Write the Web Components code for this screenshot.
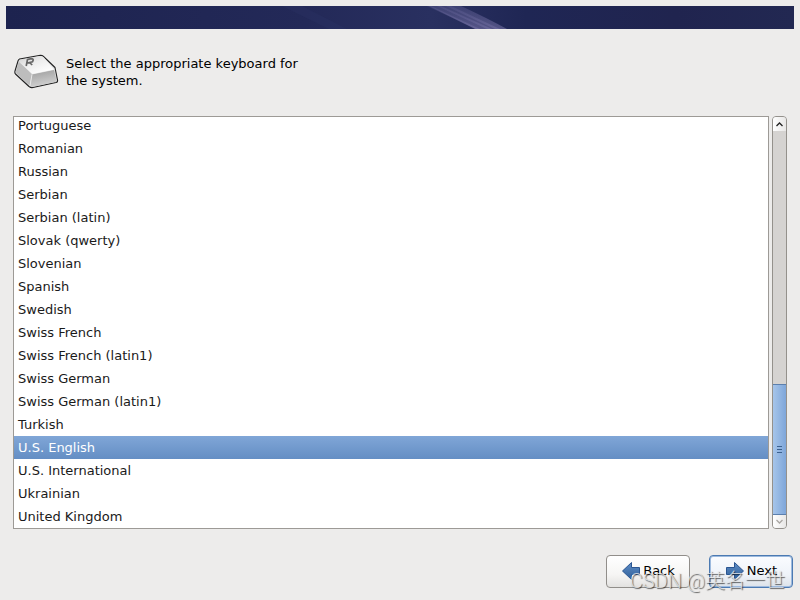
<!DOCTYPE html>
<html lang="en">
<head>
<meta charset="utf-8">
<meta name="viewport" content="width=device-width, initial-scale=1">
<title>Keyboard</title>
<style>
  body {
    margin: 0;
    background: #edeceb;
    color: #1a1a1a;
    font: 13px/17px "DejaVu Sans", sans-serif;
  }
</style>
</head>
<body>
<installer-screen>
  <installer-banner slot="banner"></installer-banner>
  <screen-prompt slot="prompt">Select the appropriate keyboard for the system.</screen-prompt>
  <keyboard-list>
    <keyboard-option>Portuguese</keyboard-option>
    <keyboard-option>Romanian</keyboard-option>
    <keyboard-option>Russian</keyboard-option>
    <keyboard-option>Serbian</keyboard-option>
    <keyboard-option>Serbian (latin)</keyboard-option>
    <keyboard-option>Slovak (qwerty)</keyboard-option>
    <keyboard-option>Slovenian</keyboard-option>
    <keyboard-option>Spanish</keyboard-option>
    <keyboard-option>Swedish</keyboard-option>
    <keyboard-option>Swiss French</keyboard-option>
    <keyboard-option>Swiss French (latin1)</keyboard-option>
    <keyboard-option>Swiss German</keyboard-option>
    <keyboard-option>Swiss German (latin1)</keyboard-option>
    <keyboard-option>Turkish</keyboard-option>
    <keyboard-option selected>U.S. English</keyboard-option>
    <keyboard-option>U.S. International</keyboard-option>
    <keyboard-option>Ukrainian</keyboard-option>
    <keyboard-option>United Kingdom</keyboard-option>
  </keyboard-list>
  <scroll-bar slot="scroll"></scroll-bar>
  <nav-button slot="actions" direction="back">Back</nav-button>
  <nav-button slot="actions" direction="next" primary>Next</nav-button>
  <water-mark slot="overlay">CSDN @英名一世</water-mark>
</installer-screen>

<script>
class InstallerScreen extends HTMLElement {
  constructor() {
    super();
    this.attachShadow({ mode: "open" });
  }

  connectedCallback() {
    this.shadowRoot.innerHTML = /* html */ `
      <style>
        :host {
          box-sizing: border-box;
          display: flex;
          flex-direction: column;
          min-height: 100vh;
          padding: 6px;
          position: relative;
        }
        main {
          flex: 1;
          display: flex;
          gap: 3px;
          padding: 0 7px;
        }
        footer {
          display: flex;
          justify-content: flex-end;
          gap: 19px;
          padding: 26px 1px 6px 0;
        }
      </style>
      <slot name="banner"></slot>
      <slot name="prompt"></slot>
      <main>
        <slot></slot>
        <slot name="scroll"></slot>
      </main>
      <footer><slot name="actions"></slot></footer>
      <slot name="overlay"></slot>
    `;
  }
}

class InstallerBanner extends HTMLElement {
  constructor() {
    super();
    this.attachShadow({ mode: "open" });
  }

  connectedCallback() {
    this.shadowRoot.innerHTML = /* html */ `
      <style>
        :host {
          display: block;
          height: 23px;
          background: linear-gradient(90deg, #1d234f, #232958 38%, #293060 54%, #1f2654 66%, #20244f 85%, #222852);
        }
        svg {
          display: block;
          width: 100%;
          height: 100%;
        }
      </style>
      <svg viewBox="0 0 788 23" preserveAspectRatio="none" aria-hidden="true">
        <defs>
          <linearGradient id="ray" x1="0" y1="0" x2="0" y2="1">
            <stop offset="0" stop-color="#7571a8" stop-opacity=".5"/>
            <stop offset="1" stop-color="#8a83b8" stop-opacity=".8"/>
          </linearGradient>
        </defs>
        <path d="M276 0h20l45 23h-18z" fill="#343a6c" opacity=".2"/>
        <path d="M423 0h32q28 13 46 23h-32z" fill="url(#ray)" opacity=".6"/>
        <path d="M421 0h4l49 23h-4zM431 0h4l51 23h-5zM440 0h5l49 23h-5z" fill="url(#ray)" opacity=".4"/>
      </svg>
    `;
  }
}

class ScreenPrompt extends HTMLElement {
  constructor() {
    super();
    this.attachShadow({ mode: "open" });
  }

  connectedCallback() {
    this.shadowRoot.innerHTML = /* html */ `
      <style>
        :host {
          display: flex;
          align-items: center;
          gap: 7px;
          padding: 24px 8px 25px;
          color: #000;
        }
        svg {
          flex: none;
          width: 45px;
          height: 38px;
        }
        p {
          margin: 0;
          max-width: 240px;
        }
      </style>
      <svg viewBox="0 0 45 38" aria-hidden="true">
        <defs>
          <linearGradient id="top" x1="0" y1="0" x2=".7" y2="1">
            <stop offset="0" stop-color="#d0d0d0"/>
            <stop offset=".45" stop-color="#ededed"/>
            <stop offset="1" stop-color="#fff"/>
          </linearGradient>
          <linearGradient id="front" x1="0" y1="0" x2=".3" y2="1">
            <stop offset="0" stop-color="#9c9c9c"/>
            <stop offset="1" stop-color="#d0d0d0"/>
          </linearGradient>
        </defs>
        <path d="M5.500 6 25 2.500q3-.5 4.500 1L41 14.500l2.500 12.500q.5 2-1.500 2.500L19 34.500q-2 .5-4-1L1.500 21q-1-1-.5-3L4 8q.5-1.500 1.500-2z" fill="#ddd" stroke="#222" stroke-width="1.100" stroke-linejoin="round"/>
        <path d="M18 21.500 40 17l2.500 10.500q0 1-1.500 1.500L18.500 33.800l-2.500-1z" fill="url(#front)"/>
        <path d="M5 8 1.800 18.500l.7 2L15.500 32.500l2.500-11z" fill="#bdbdbd"/>
        <path d="M5.500 7 25 3.200q3-.5 4.500 1L40.300 16.500 18.500 21 5 9z" fill="url(#top)"/>
        <path d="m18 21.500-2 11.500" stroke="#e8e8e8" fill="none"/>
        <path d="m12.200 13 1.300-6.500 4-.8q2.800.2 1 3l-5 1.300M15.500 9.500l2.700 2.500" fill="none" stroke="#666" stroke-width="1.700"/>
      </svg>
      <p><slot></slot></p>
    `;
  }
}

class KeyboardList extends HTMLElement {
  constructor() {
    super();
    this.attachShadow({ mode: "open" });
  }

  connectedCallback() {
    this.setAttribute("role", "listbox");
    this.setAttribute("aria-label", "Keyboard");
    this.tabIndex = 0;
    // rows are anchored to the bottom: the list is scrolled to its end
    this.shadowRoot.innerHTML = /* html */ `
      <style>
        :host {
          box-sizing: border-box;
          flex: 1;
          display: flex;
          flex-direction: column;
          justify-content: flex-end;
          height: calc(100vh - 187px);
          min-width: 0;
          overflow: hidden;
          border: 1px solid #9d9a96;
          background: #fff;
          outline: none;
        }
      </style>
      <slot></slot>
    `;
    this.addEventListener("click", (event) => {
      const option = event.target.closest("keyboard-option");
      if (!option) return;
      for (const item of this.children) {
        item.toggleAttribute("selected", item === option);
        item.setAttribute("aria-selected", item === option);
      }
    });
  }
}

class KeyboardOption extends HTMLElement {
  constructor() {
    super();
    this.attachShadow({ mode: "open" });
  }

  connectedCallback() {
    this.setAttribute("role", "option");
    this.setAttribute("aria-selected", this.hasAttribute("selected"));
    this.shadowRoot.innerHTML = /* html */ `
      <style>
        :host {
          display: block;
          flex: none;
          padding: 0 4px;
          line-height: 23px;
          cursor: default;
        }
        :host([selected]) {
          background: linear-gradient(#80a6d7, #648ec4);
          color: #fff;
        }
      </style>
      <slot></slot>
    `;
  }
}

class ScrollBar extends HTMLElement {
  constructor() {
    super();
    this.attachShadow({ mode: "open" });
  }

  connectedCallback() {
    this.shadowRoot.innerHTML = /* html */ `
      <style>
        :host {
          box-sizing: border-box;
          flex: none;
          display: flex;
          flex-direction: column;
          width: 15px;
          border: 1px solid #94918c;
          border-radius: 4px;
          background: #d5d3d1;
          overflow: hidden;
        }
        button {
          flex: none;
          display: grid;
          place-items: center;
          height: 14px;
          padding: 0;
          border: 0;
          background: linear-gradient(90deg, #fff, #e8e7e6);
          color: #222;
        }
        button:first-child {
          border-bottom: 1px solid #94918c;
        }
        button:disabled {
          height: 13px;
          color: #aaa7a3;
        }
        svg {
          width: 7px;
          height: 5px;
        }
        .track {
          flex: 1;
          display: flex;
          flex-direction: column;
          justify-content: flex-end;
        }
        .thumb {
          box-sizing: border-box;
          display: grid;
          place-content: center;
          gap: 2px;
          height: 34%;
          border: solid #5b7fae;
          border-width: 1px 0;
          background: linear-gradient(90deg, #a6c5ea, #7ea6da);
          box-shadow: -1px 0 #5b7fae, 1px 0 #5b7fae;
        }
        .thumb i {
          width: 5px;
          height: 1px;
          background: #3c618f;
        }
      </style>
      <button type="button" aria-label="Scroll up">
        <svg viewBox="0 0 7 5"><path d="m.5 4 3-3 3 3" fill="none" stroke="currentColor" stroke-width="1.300"/></svg>
      </button>
      <div class="track"><div class="thumb"><i></i><i></i><i></i></div></div>
      <button type="button" aria-label="Scroll down" disabled>
        <svg viewBox="0 0 7 5"><path d="m.5 1 3 3 3-3" fill="none" stroke="currentColor" stroke-width="1.300"/></svg>
      </button>
    `;
  }
}

class NavButton extends HTMLElement {
  constructor() {
    super();
    this.attachShadow({ mode: "open" });
  }

  connectedCallback() {
    const arrow = this.getAttribute("direction") === "next"
      ? "M1.500 6.500h8v-5l9 8.500-9 8.500v-5h-8z"
      : "M18.500 6.500h-8v-5L1.500 10l9 8.500v-5h8z";
    this.shadowRoot.innerHTML = /* html */ `
      <style>
        :host {
          display: block;
        }
        button {
          box-sizing: border-box;
          display: flex;
          align-items: center;
          justify-content: center;
          gap: 2px;
          min-width: 84px;
          height: 33px;
          padding: 0 12px 2px;
          border: 1px solid #918e8a;
          border-radius: 4px;
          background: linear-gradient(#fff, #f6f5f4 60%, #e3e2e0);
          color: #000;
          font: inherit;
        }
        :host([primary]) button {
          border-color: #4c7ab2;
          background: linear-gradient(#fafcff, #eff3f9 60%, #dce2e9);
          box-shadow: inset 0 0 0 1px #9dbade;
        }
        svg {
          width: 20px;
          height: 20px;
        }
      </style>
      <button type="button">
        <svg viewBox="0 0 20 20" aria-hidden="true">
          <defs>
            <linearGradient id="fill" x1="0" y1="0" x2="0" y2="1">
              <stop offset="0" stop-color="#5c8cc6"/>
              <stop offset="1" stop-color="#326099"/>
            </linearGradient>
          </defs>
          <path d="${arrow}" fill="url(#fill)" stroke="#2a5591" stroke-linejoin="round"/>
        </svg>
        <slot></slot>
      </button>
    `;
  }
}

class WaterMark extends HTMLElement {
  constructor() {
    super();
    this.attachShadow({ mode: "open" });
  }

  connectedCallback() {
    this.shadowRoot.innerHTML = /* html */ `
      <style>
        :host {
          position: absolute;
          right: 15px;
          bottom: 7px;
          font: 300 20px/24px Roboto, "Noto Sans CJK SC", sans-serif;
          color: rgba(235, 235, 235, 0.8);
          text-shadow: 1px 1px 1px rgba(0, 0, 0, 0.6);
          white-space: nowrap;
          pointer-events: none;
        }
      </style>
      <slot></slot>
    `;
  }
}

customElements.define("installer-screen", InstallerScreen);
customElements.define("installer-banner", InstallerBanner);
customElements.define("screen-prompt", ScreenPrompt);
customElements.define("keyboard-list", KeyboardList);
customElements.define("keyboard-option", KeyboardOption);
customElements.define("scroll-bar", ScrollBar);
customElements.define("nav-button", NavButton);
customElements.define("water-mark", WaterMark);
</script>
</body>
</html>
